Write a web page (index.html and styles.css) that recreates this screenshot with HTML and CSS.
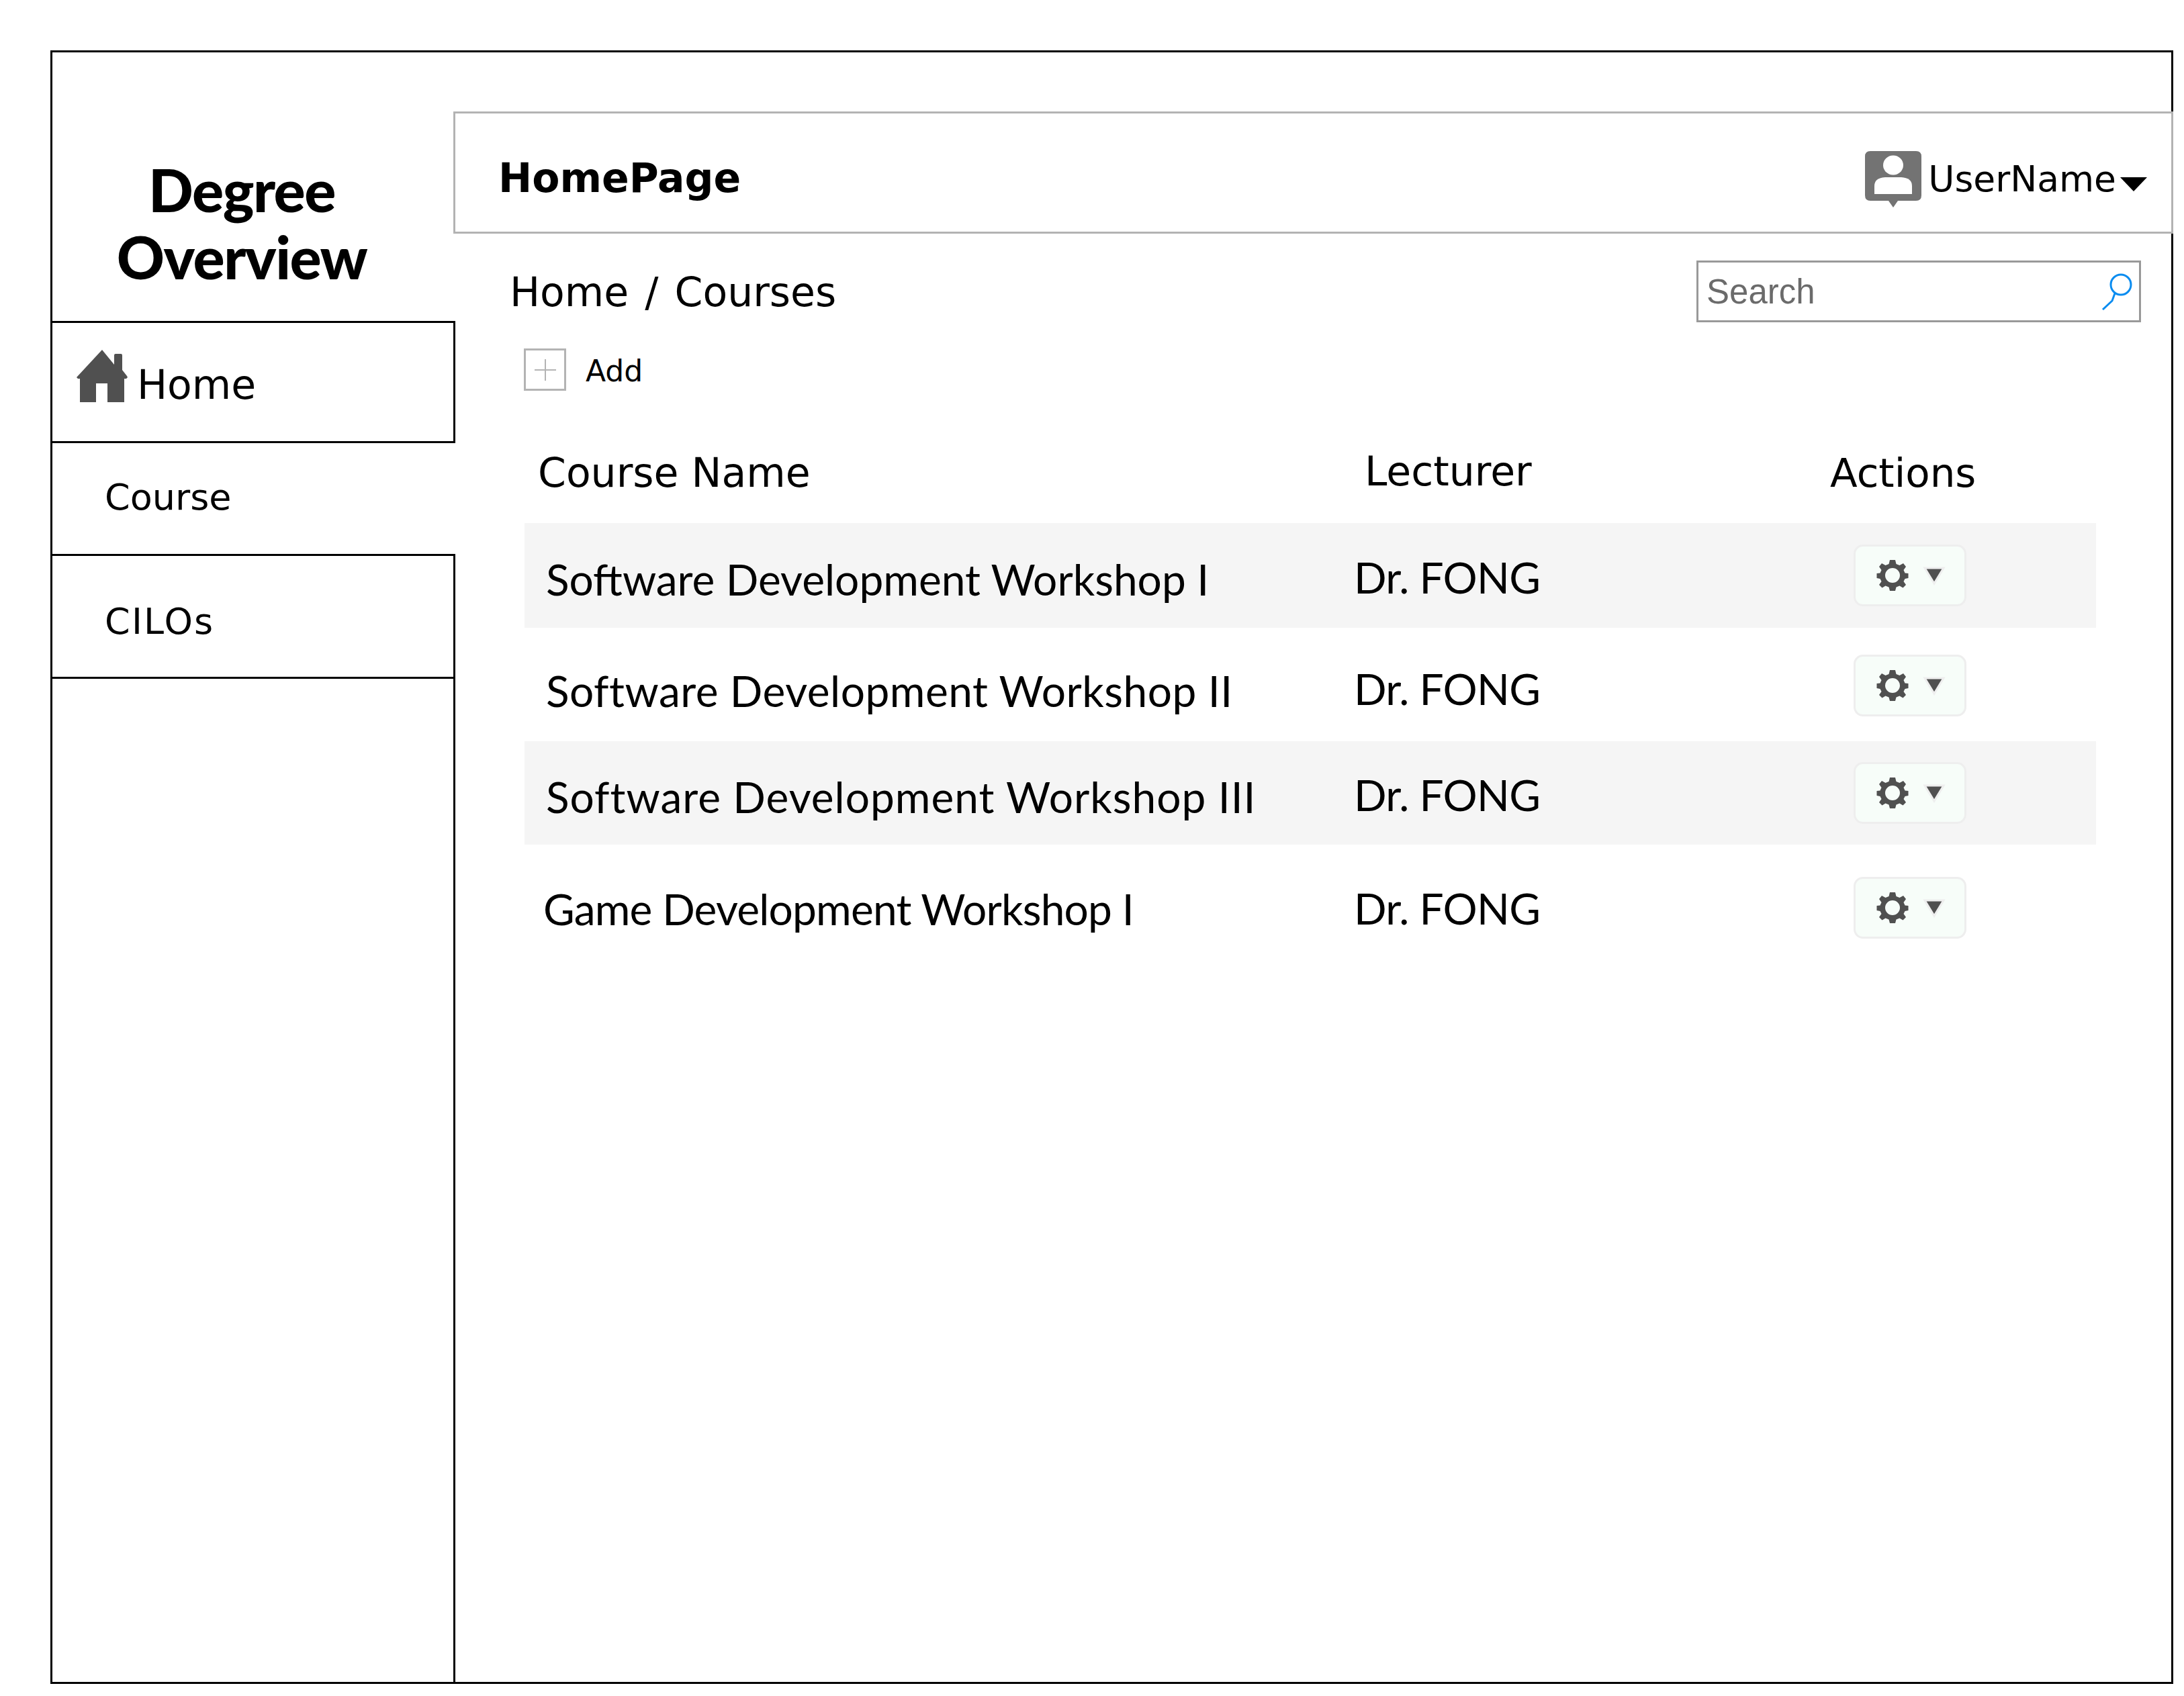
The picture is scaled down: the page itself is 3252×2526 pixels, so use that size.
FILE: index.html
```html
<!DOCTYPE html>
<html lang="en">
<head>
  <meta charset="UTF-8">
  <title>Degree Overview</title>
  <link rel="stylesheet" href="styles.css">
</head>
<body>

  <div class="frame">
    <aside class="sidebar">
      <div class="brand">Degree<br>Overview</div>
      <nav class="nav">
        <a class="nav-item nav-home">
          <svg class="home-icon" viewBox="0 0 76 78"><path d="M38 0 L56 22 V8 Q56 6 58 6 H66 Q68 6 68 8 V30 L75 39 L76 41 L74 43 H71 V78 H46 V50 H29 V78 H5 V43 H2 L0 41 Z" fill="#505050"/></svg>
          <span class="home-label">Home</span>
        </a>
        <a class="nav-item nav-course">Course</a>
        <a class="nav-item nav-cilos">CILOs</a>
        <div class="nav-rest"></div>
      </nav>
    </aside>

    <main class="main">
      <header class="topbar">
        <h1 class="page-title">HomePage</h1>
        <div class="user">
          <svg class="user-icon" viewBox="0 0 84 84"><path d="M8 0 H76 Q84 0 84 8 V66 Q84 74 76 74 H49 L42 84 L35 74 H8 Q0 74 0 66 V8 Q0 0 8 0 Z" fill="#737373"/><ellipse cx="42" cy="21" rx="15" ry="14.5" fill="#fff"/><path d="M14 64 V52 Q14 40 30 39 H54 Q70 40 70 52 V64 Z" fill="#fff"/></svg>
          <span class="user-name">UserName</span>
          <span class="user-caret"></span>
        </div>
      </header>

      <div class="crumb-row">
        <div class="crumbs">Home / Courses</div>
        <div class="search">
          <span class="search-text">Search</span>
          <svg class="search-icon" viewBox="0 0 46 56"><circle cx="29" cy="18" r="15" fill="none" stroke="#0a8cf0" stroke-width="3"/><path d="M20 31 L16 42 L2 55" fill="none" stroke="#0a8cf0" stroke-width="3"/></svg>
        </div>
      </div>

      <div class="add-row">
        <span class="add-box"><svg viewBox="0 0 32 32"><path d="M16 0 V32 M0 16 H32" stroke="#b3b3b3" stroke-width="2"/></svg></span>
        <span class="add-label">Add</span>
      </div>

      <div class="table-head">
        <div class="col-name">Course Name</div>
        <div class="col-lecturer">Lecturer</div>
        <div class="col-actions">Actions</div>
      </div>

      <div class="table-row row-a striped">
        <div class="cell-name">Software Development Workshop I</div>
        <div class="cell-lecturer">Dr. FONG</div>
        <div class="cell-actions"><button class="gear-btn"><svg class="gear" viewBox="0 0 48 48"><use href="#gear"/></svg><svg class="tri" viewBox="0 0 36 28"><path d="M4 2 H32 L18 25 Z" fill="#505050" stroke="#eeeeee" stroke-width="3"/></svg></button></div>
      </div>
      <div class="table-row row-b">
        <div class="cell-name">Software Development Workshop II</div>
        <div class="cell-lecturer">Dr. FONG</div>
        <div class="cell-actions"><button class="gear-btn"><svg class="gear" viewBox="0 0 48 48"><use href="#gear"/></svg><svg class="tri" viewBox="0 0 36 28"><path d="M4 2 H32 L18 25 Z" fill="#505050" stroke="#eeeeee" stroke-width="3"/></svg></button></div>
      </div>
      <div class="table-row row-c striped">
        <div class="cell-name">Software Development Workshop III</div>
        <div class="cell-lecturer">Dr. FONG</div>
        <div class="cell-actions"><button class="gear-btn"><svg class="gear" viewBox="0 0 48 48"><use href="#gear"/></svg><svg class="tri" viewBox="0 0 36 28"><path d="M4 2 H32 L18 25 Z" fill="#505050" stroke="#eeeeee" stroke-width="3"/></svg></button></div>
      </div>
      <div class="table-row row-d">
        <div class="cell-name">Game Development Workshop I</div>
        <div class="cell-lecturer">Dr. FONG</div>
        <div class="cell-actions"><button class="gear-btn"><svg class="gear" viewBox="0 0 48 48"><use href="#gear"/></svg><svg class="tri" viewBox="0 0 36 28"><path d="M4 2 H32 L18 25 Z" fill="#505050" stroke="#eeeeee" stroke-width="3"/></svg></button></div>
      </div>
    </main>
  </div>

  <svg class="defs" width="0" height="0">
    <defs>
      <g id="gear" fill="#505050">
        <path fill-rule="evenodd" d="M20 1 H28 L29.5 7 L34.5 9 L40 6 L44 11 L40.5 16 L42.5 20.5 L47.5 21 V28 L42.5 29 L40.5 33 L44 38 L39.5 42.5 L34.5 39.5 L29.5 41.5 L28 47 H20 L18.5 41.5 L13.5 39.5 L8.5 42.5 L4 38 L7.5 33 L5.5 29 L0.5 28 V21 L5.5 20.5 L7.5 16 L4 11 L8 6 L13.5 9 L18.5 7 Z M24 13 A11 11 0 1 0 24 35 A11 11 0 1 0 24 13 Z"/>
      </g>
    </defs>
  </svg>

</body>
</html>
```

FILE: styles.css
```css
body {
  margin: 0;
  background: #fff;
  font-family: 'DejaVu Sans', sans-serif;
  color: #000;
}

.frame {
  display: flex;
  box-sizing: border-box;
  width: 3161px;
  height: 2433px;
  margin: 75px 0 0 75px;
  border: 3px solid #000;
}

.defs {
  position: absolute;
}

/* Sidebar */
.sidebar {
  width: 600px;
  flex: none;
  display: flex;
  flex-direction: column;
}

.brand {
  box-sizing: border-box;
  height: 403px;
  padding: 154px 36px 0 0;
  text-align: center;
  font-family: 'Lato', sans-serif;
  font-weight: 900;
  font-size: 88px;
  line-height: 100px;
  letter-spacing: -1.5px;
  border-bottom: 3px solid #000;
}

.nav {
  flex: 1;
  display: flex;
  flex-direction: column;
}

.nav-item {
  display: flex;
  align-items: center;
  box-sizing: border-box;
  border-bottom: 3px solid #000;
  padding-left: 78px;
  font-size: 54px;
}

.nav-home {
  height: 179px;
  padding-left: 36px;
  gap: 14px;
  font-size: 60px;
  border-right: 3px solid #000;
}

.home-label {
  margin-top: 8px;
}

.nav-course {
  height: 168px;
  padding-bottom: 4px;
}

.nav-cilos {
  height: 183px;
  padding-top: 14px;
  letter-spacing: 2.2px;
  border-right: 3px solid #000;
}

.nav-rest {
  flex: 1;
  border-right: 3px solid #000;
}

.home-icon {
  width: 76px;
  height: 78px;
  margin-top: -18px;
}

/* Main */
.main {
  flex: 1;
  min-width: 0;
  padding-top: 88px;
}

.topbar {
  display: flex;
  align-items: center;
  justify-content: space-between;
  box-sizing: border-box;
  height: 182px;
  margin: 0 -3px 0 -3px;
  padding: 15px 36px 0 64px;
  border: 3px solid #b3b3b3;
  background: #fff;
}

.page-title {
  margin: 0;
  font-size: 60px;
  font-weight: bold;
}

.user {
  display: flex;
  align-items: center;
}

.user-icon {
  width: 84px;
  height: 84px;
  margin-top: 4px;
}

.user-name {
  margin: 4px 0 0 10px;
  font-size: 53.5px;
}

.user-caret {
  width: 0;
  height: 0;
  margin: 20px 0 0 6px;
  border-left: 20px solid transparent;
  border-right: 20px solid transparent;
  border-top: 21px solid #000;
}

.crumb-row {
  display: flex;
  justify-content: space-between;
  align-items: flex-start;
  padding: 40px 45px 0 81px;
}

.crumbs {
  margin-top: 8px;
  font-size: 60px;
  line-height: 78px;
  word-spacing: 5px;
}

.search {
  display: flex;
  align-items: center;
  justify-content: space-between;
  box-sizing: border-box;
  width: 662px;
  height: 92px;
  padding: 0 10px 0 12px;
  border: 3px solid #999;
}

.search-text {
  font-family: 'Liberation Sans', sans-serif;
  font-size: 51px;
  color: #6b6b6b;
}

.search-icon {
  width: 46px;
  height: 56px;
}

.add-row {
  display: flex;
  align-items: center;
  gap: 29px;
  margin: 39px 0 0 102px;
}

.add-box {
  display: flex;
  align-items: center;
  justify-content: center;
  box-sizing: border-box;
  width: 63px;
  height: 63px;
  border: 3px solid #b3b3b3;
}

.add-box svg {
  width: 32px;
  height: 32px;
}

.add-label {
  margin-top: 4px;
  font-size: 44px;
}

.table-head {
  display: grid;
  grid-template-columns: 1232px 713px 1fr;
  align-items: center;
  box-sizing: border-box;
  height: 197px;
  padding-top: 47px;
  margin: 0 112px 0 102px;
  font-size: 60px;
}

.col-name {
  padding-left: 21px;
}

.col-lecturer {
  padding-left: 20px;
  padding-bottom: 4px;
}

.col-actions {
  font-size: 59.5px;
}

.table-row {
  display: grid;
  grid-template-columns: 1232px 1fr 418px;
  align-items: center;
  box-sizing: border-box;
  margin: 0 112px 0 103px;
  font-family: 'Lato', sans-serif;
  font-size: 64px;
}

.striped {
  background: #f5f5f5;
}

.row-a { height: 156px; }
.row-b { height: 169px; padding-top: 3px; }
.row-c { height: 154px; }
.row-d { height: 188px; }

.cell-name {
  padding-left: 32px;
  padding-top: 10px;
}

.row-b .cell-name {
  padding-top: 14px;
  letter-spacing: 0.5px;
}

.row-c .cell-name {
  letter-spacing: 1px;
}

.row-d .cell-name {
  padding-left: 28px;
  padding-top: 2px;
  letter-spacing: -0.8px;
}

.cell-lecturer {
  padding-left: 3px;
  padding-top: 4px;
  letter-spacing: -0.7px;
}

.row-b .cell-lecturer {
  padding-top: 8px;
}

.row-d .cell-lecturer {
  padding-top: 0;
}

.cell-actions {
  padding-left: 57px;
}

.gear-btn {
  display: flex;
  align-items: center;
  box-sizing: border-box;
  width: 168px;
  height: 92px;
  padding: 0 0 0 31px;
  background: #f7fdf9;
  border: 3px solid #eeeeee;
  border-radius: 14px;
}

.gear {
  width: 48px;
  height: 48px;
}

.tri {
  width: 36px;
  height: 28px;
  margin: 2px 0 0 20px;
}
```
